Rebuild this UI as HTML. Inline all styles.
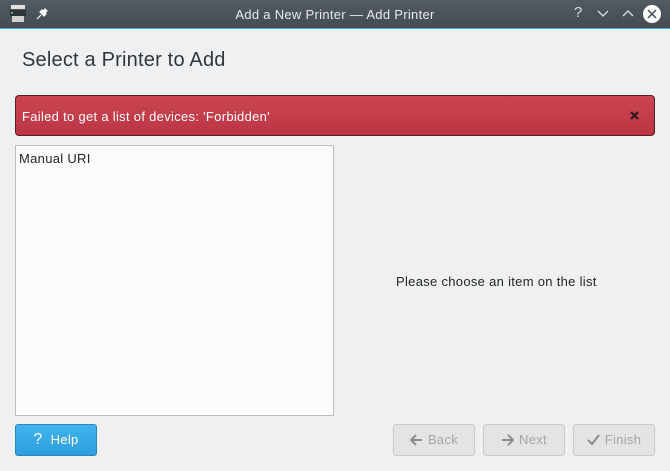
<!DOCTYPE html>
<html><head><style>
*{box-sizing:border-box;margin:0;padding:0}
body{width:670px;height:471px;background:#eff0f1;font-family:"Liberation Sans",sans-serif;position:relative;overflow:hidden;font-size:13px;color:#232627;letter-spacing:0.3px}
.tb{position:absolute;left:0;top:0;width:670px;height:28px;background:linear-gradient(#525a62,#454c53);color:#eff0f1}
.tb .line{position:absolute;left:0;top:28px;width:670px;height:1px;background:#3daee9}
.title{position:absolute;left:0;width:670px;top:7px;text-align:center;font-size:13px;color:#e8e9ea}
.ab{position:absolute;font-size:15px;color:#dfe0e1}
h1{position:absolute;left:22px;top:49px;font-size:20px;font-weight:normal;color:#31363b;letter-spacing:0.2px}
.err{position:absolute;left:15px;top:95px;width:640px;height:41px;background:linear-gradient(#ca4552,#bc3544);border:1px solid #5c1c23;border-radius:4px;color:#fff;padding:13px 0 0 6px;font-size:13px}
.list{position:absolute;left:15px;top:145px;width:319px;height:271px;background:#fcfcfc;border:1px solid #bcbebf;padding:5px 3px}
.msg{position:absolute;left:396px;top:274px}
.btn{position:absolute;top:424px;height:32px;border:1px solid #c8cacb;border-radius:3px;background:#e3e4e5;color:#a4a6a8;font-size:13px;text-align:center;line-height:30px}
.btn svg{vertical-align:-2px;margin-right:5px}
.help{left:15px;width:82px;background:linear-gradient(#41b4ee,#2d9edc);border-color:#2a8ac0;color:#fff}
</style></head><body>
<div class="tb"><div class="line"></div>
<svg style="position:absolute;left:10px;top:5px" width="16" height="18"><rect x="1" y="0" width="14" height="4" fill="#e0e0e0"/><rect x="0" y="5" width="16" height="6" fill="#2f3338"/><rect x="1" y="7" width="2" height="1.5" fill="#6ad35a"/><rect x="2" y="11" width="12" height="6" fill="#d0d0d0"/></svg>
<svg style="position:absolute;left:36px;top:8px" width="12" height="12"><path d="M1 11L5 7M4 4L8 8L10 6L9 5L11 3L9 1L7 3L6 2Z" stroke="#fff" fill="#fff" stroke-width="1.2"/></svg>
<div class="title">Add a New Printer — Add Printer</div>
<div class="ab" style="left:574px;top:4px">?</div>
<svg style="position:absolute;left:597px;top:10px" width="12" height="8"><path d="M1 1L6 6L11 1" stroke="#dfe0e1" fill="none" stroke-width="1.3"/></svg>
<svg style="position:absolute;left:622px;top:9px" width="12" height="8"><path d="M1 7L6 2L11 7" stroke="#dfe0e1" fill="none" stroke-width="1.3"/></svg>
<svg style="position:absolute;left:642px;top:4px" width="20" height="20"><circle cx="10" cy="10" r="9" fill="#fcfcfc"/><path d="M6 6L14 14M14 6L6 14" stroke="#454c53" stroke-width="1.5"/></svg>
</div>
<h1>Select a Printer to Add</h1>
<div class="err">Failed to get a list of devices: 'Forbidden'<svg style="position:absolute;left:614px;top:15px" width="9" height="9"><path d="M1 1L8 8M8 1L1 8" stroke="#2b1a1c" stroke-width="2.2"/></svg></div>
<div class="list">Manual URI</div>
<div class="msg">Please choose an item on the list</div>
<div class="btn help"><b style="font-size:16px;font-weight:normal;margin-right:8px">?</b>Help</div>
<div class="btn" style="left:393px;width:82px"><svg width="13" height="12"><path d="M12 6H2M6 1L1 6L6 11" stroke="#8a8c8e" stroke-width="2" fill="none"/></svg>Back</div>
<div class="btn" style="left:483px;width:82px"><svg width="13" height="12"><path d="M1 6H11M7 1L12 6L7 11" stroke="#8a8c8e" stroke-width="2" fill="none"/></svg>Next</div>
<div class="btn" style="left:573px;width:82px"><svg width="13" height="12"><path d="M1 6L5 10L12 1" stroke="#8a8c8e" stroke-width="2" fill="none"/></svg>Finish</div>
</body></html>
